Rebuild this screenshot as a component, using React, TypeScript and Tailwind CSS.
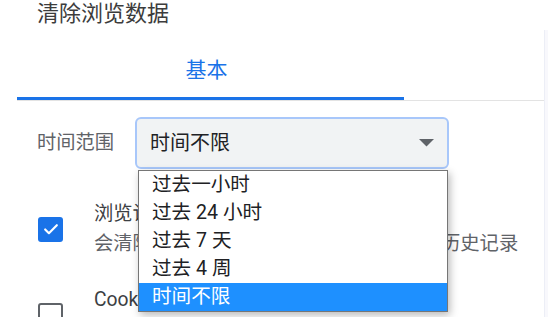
import React from "react";

const font = { fontFamily: "Roboto, 'Noto Sans CJK SC', sans-serif" };

function Checkbox({ checked }: { checked: boolean }) {
  if (checked) {
    return (
      <div className="w-[25px] h-[25px] shrink-0 rounded-[3px] bg-[#1a73e8] flex items-center justify-center">
        <svg width="20" height="20" viewBox="0 0 24 24" fill="none">
          <path d="M5 12.5l4.5 4.5L19 7.5" stroke="white" strokeWidth="2.6" strokeLinecap="round" strokeLinejoin="round" />
        </svg>
      </div>
    );
  }
  return <div className="w-[25px] h-[25px] shrink-0 rounded-[3px] border-[2.5px] border-[#5f6368]" />;
}

export default function App() {
  const items = ["过去一小时", "过去 24 小时", "过去 7 天", "过去 4 周", "时间不限"];
  return (
    <div className="relative w-[548px] h-[317px] overflow-hidden bg-white" style={font}>
      <div className="h-[30px] pl-[37px] text-[22px] leading-[28px] text-[#3c3c3c]">清除浏览数据</div>
      <div className="flex h-[287px]">
        <div className="w-[545px] shrink-0 border-r border-[#eceef6]">
          <div className="ml-[17px] flex border-b border-[#e3e3e3]">
            <div className="w-[387px] h-[70px] pt-[26px] pr-[8px] text-center text-[21px] leading-[28px] text-[#1a73e8] border-b-[3px] border-[#1a73e8]">
              基本
            </div>
          </div>
          <div className="flex items-center mt-[16px] pl-[37px]">
            <div className="w-[98px] text-[19.3px] leading-[28px] text-[#5f6368]">时间范围</div>
            <div className="w-[314px] h-[52px] rounded-[6px] border-2 border-[#a8c7fa] bg-[#f1f3f4] flex items-center pl-[13px] pr-[13px]">
              <span className="flex-1 text-[20px] leading-[28px] text-[#202124]">时间不限</span>
              <svg width="15" height="8" viewBox="0 0 15 8">
                <path d="M0 0h15L7.5 7.5z" fill="#5f6368" />
              </svg>
            </div>
          </div>
          <div className="mt-[30px] flex flex-col gap-[26px]">
            <div className="flex items-center pl-[38px]">
              <Checkbox checked />
              <div className="ml-[31px] text-[19.3px] leading-[30px] whitespace-nowrap">
                <div className="text-[#3c4043]">浏览记录</div>
                <div className="text-[#5f6368]">会清除所有已同步设备上以及搜索框中的历史记录</div>
              </div>
            </div>
            <div className="flex items-center pl-[38px]">
              <Checkbox checked={false} />
              <div className="ml-[31px] text-[19.3px] leading-[30px] whitespace-nowrap">
                <div className="text-[#3c4043]">Cookie 及其他网站数据</div>
                <div className="text-[#5f6368]">会让您从大多数网站退出。</div>
              </div>
            </div>
          </div>
        </div>
        <div className="flex-1 bg-[#f8f8fc]" />
      </div>
      <div className="absolute left-[138px] top-[170px] w-[310px] border border-[#767676] bg-white shadow-[2px_3px_8px_rgba(0,0,0,0.28)]">
        {items.map((t, i) => (
          <div
            key={t}
            className={
              i === 4
                ? "h-[28px] pl-[13px] text-[19.6px] leading-[28px] bg-[#1e90ff] text-white"
                : "h-[28px] pl-[13px] text-[19.6px] leading-[28px] text-[#202124]"
            }
          >
            {t}
          </div>
        ))}
      </div>
    </div>
  );
}
